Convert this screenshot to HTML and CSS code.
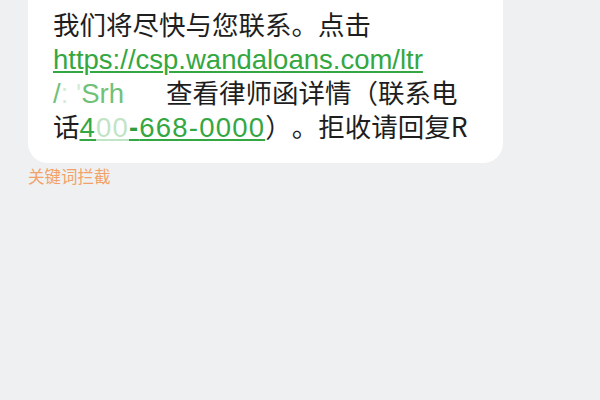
FILE: index.html
```html
<!DOCTYPE html>
<html lang="zh">
<head>
<meta charset="utf-8">
<link rel="stylesheet" href="styles.css">
</head>
<body>
<div class="thread">
  <div class="bubble">
    <div class="line">我们将尽快与您联系。点击</div>
    <div class="line"><span class="link">https://csp.wandaloans.com/ltr</span></div>
    <div class="line"><span class="link blur">/<span class="fade">:</span> <span class="fade">'</span>Srh</span><span class="gap"></span>查看律师函详情（联系电</div>
    <div class="line">话<span class="link phone">4<span class="fade">00</span><span class="mask">-</span>668-0000</span>）。拒收请回复R</div>
  </div>
  <div class="tag">关键词拦截</div>
</div>
</body>
</html>
```
FILE: styles.css
```css
html, body {
  margin: 0;
  padding: 0;
  background: #eff0f2;
  width: 600px;
  height: 400px;
  overflow: hidden;
}
.thread {
  padding-left: 28px;
  font-family: "Noto Sans CJK SC", "Noto Sans", sans-serif;
}
.bubble {
  width: 475px;
  box-sizing: border-box;
  background: #ffffff;
  border-radius: 0 0 20px 20px;
  padding: 7px 20px 20px 25px;
  color: #1e1e1e;
  font-size: 26.5px;
  text-spacing-trim: space-all;
}
.line {
  height: 34px;
  line-height: 34px;
  white-space: nowrap;
}
.link {
  font-family: "Liberation Sans", "Noto Sans CJK SC", sans-serif;
  font-size: 27.5px;
  line-height: 34px;
  color: #33a741;
  text-decoration: underline;
  text-decoration-thickness: 1.5px;
  text-underline-offset: 2px;
}
.phone {
  letter-spacing: 1.2px;
}
.blur {
  opacity: 0.7;
  text-decoration: none;
}
.fade {
  opacity: 0.3;
}
.mask {
  color: #2e9d3c;
  font-weight: bold;
}
.gap {
  display: inline-block;
  width: 42px;
}
.tag {
  margin-top: 3px;
  font-size: 16.5px;
  line-height: 20px;
  color: #f2a268;
}
```
